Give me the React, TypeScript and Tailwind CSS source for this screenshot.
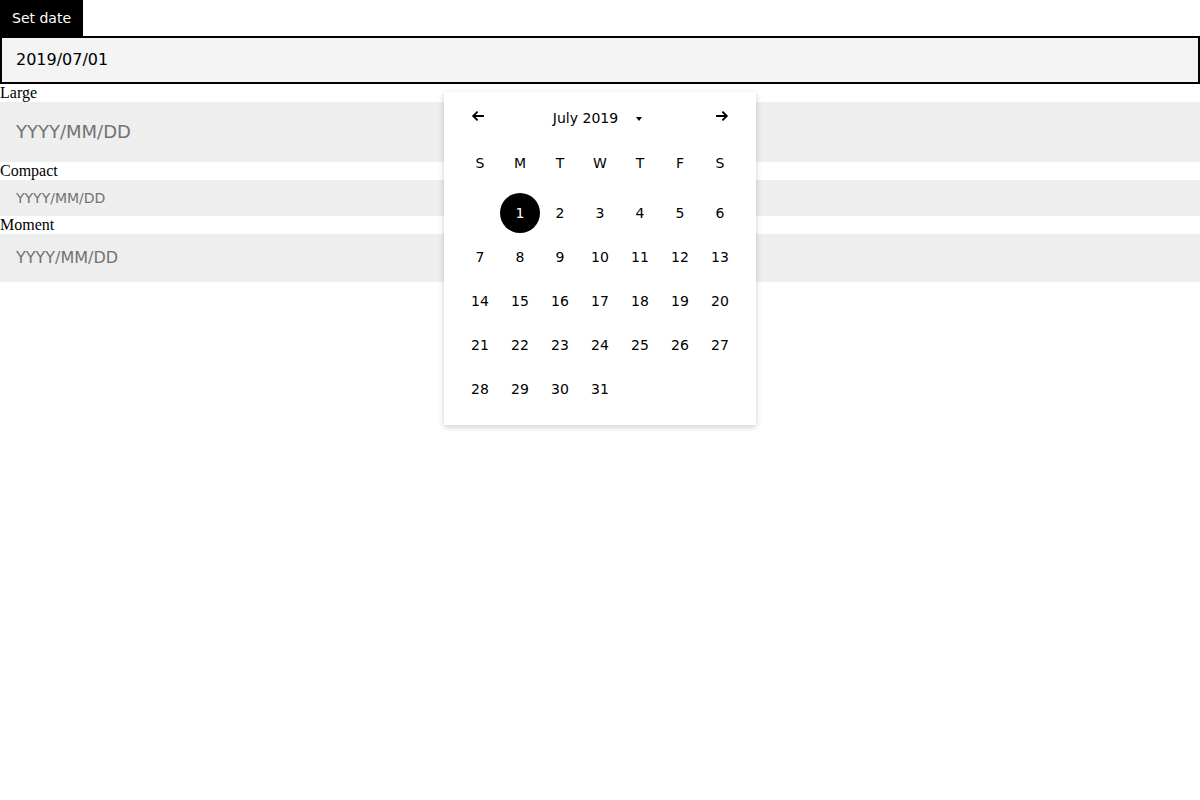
import React from 'react';

const sans = "font-['DejaVu_Sans',sans-serif]";

const weekdays = ['S', 'M', 'T', 'W', 'T', 'F', 'S'];
// July 2019 starts on a Monday
const days: (number | null)[] = [null, ...Array.from({ length: 31 }, (_, i) => i + 1)];

function ArrowLeft() {
  return (
    <svg width="16" height="16" viewBox="0 0 16 16" fill="none">
      <path d="M13 8H3.5M7 4.2L3.2 8L7 11.8" stroke="#000" strokeWidth="1.8" strokeLinecap="square" />
    </svg>
  );
}

function ArrowRight() {
  return (
    <svg width="16" height="16" viewBox="0 0 16 16" fill="none">
      <path d="M3 8h9.5M9 4.2L12.8 8L9 11.8" stroke="#000" strokeWidth="1.8" strokeLinecap="square" />
    </svg>
  );
}

function Calendar() {
  return (
    <div className={`absolute left-[444px] top-[92px] w-[312px] bg-white px-4 pb-[14px] shadow-[0_2px_6px_rgba(0,0,0,0.2)] ${sans}`}>
      {/* Header */}
      <div className="-mx-[2px] flex h-12 items-center">
        <button className="flex h-10 w-10 items-center justify-center">
          <ArrowLeft />
        </button>
        <div className="mt-1 flex flex-1 items-center justify-center pr-[5px] text-sm text-black">
          <span>July 2019</span>
          <span className="ml-[18px] mt-[1px] h-0 w-0 border-x-[3px] border-t-[4px] border-x-transparent border-t-black" />
        </div>
        <button className="flex h-10 w-10 items-center justify-center">
          <ArrowRight />
        </button>
      </div>

      {/* Weekdays */}
      <div className="grid h-[46px] grid-cols-7 items-center text-sm text-black">
        {weekdays.map((d, i) => (
          <span key={i} className="text-center">
            {d}
          </span>
        ))}
      </div>

      {/* Days */}
      <div className="mt-[5px] grid grid-cols-7">
        {days.map((d, i) => (
          <div key={i} className="flex h-11 items-center justify-center">
            {d !== null && (
              <span
                className={`flex h-10 w-10 items-center justify-center rounded-full text-sm ${
                  d === 1 ? 'bg-black text-white' : 'text-black'
                }`}
              >
                {d}
              </span>
            )}
          </div>
        ))}
      </div>
    </div>
  );
}

function Label({ children }: { children: React.ReactNode }) {
  return <div className="font-['Liberation_Serif',serif] text-base leading-[18px] text-black">{children}</div>;
}

export default function App() {
  return (
    <div className="relative min-h-[800px] w-full bg-white">
      <button className={`h-9 bg-black px-3 text-sm text-white ${sans}`}>Set date</button>

      <div className={`flex h-12 items-center border-2 border-black bg-[#f4f4f4] px-[14px] text-base text-black ${sans}`}>
        2019/07/01
      </div>

      <Label>Large</Label>
      <div className={`flex h-[60px] items-center bg-[#eeeeee] px-4 text-lg text-[#737373] ${sans}`}>YYYY/MM/DD</div>

      <Label>Compact</Label>
      <div className={`flex h-9 items-center bg-[#eeeeee] px-4 text-sm text-[#737373] ${sans}`}>YYYY/MM/DD</div>

      <Label>Moment</Label>
      <div className={`flex h-12 items-center bg-[#eeeeee] px-4 text-base text-[#737373] ${sans}`}>YYYY/MM/DD</div>

      <Calendar />
    </div>
  );
}
